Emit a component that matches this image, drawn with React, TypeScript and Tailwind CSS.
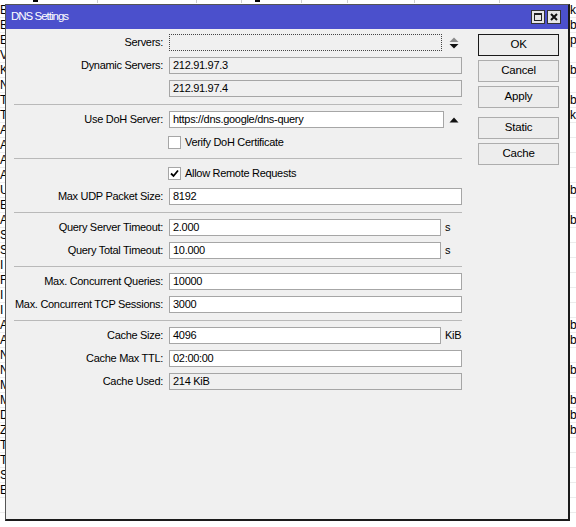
import React from "react";

const FONT = { fontFamily: '"Liberation Sans", Arial, sans-serif' };

const LEFT = ["B", "B", "E", "V", "K", "N", "T", "T", "A", "A", "A", "A", "U", "E", "A", "S", "S", "I", "F", "I", "I", "A", "A", "N", "N", "M", "M", "D", "Z", "T", "T", "S", "E", "", ""];
const RIGHT: Record<number, string> = { 0: "k", 1: "b", 2: "p", 4: "b", 6: "b", 7: "k", 12: "b", 14: "b", 21: "bs", 22: "bs", 24: "b", 26: "bs", 27: "bs", 28: "bp" };
const HEADER = [98, 99, 45, 60, 46, 67, 85];

const Label = ({ text }: { text: string }) => (
  <div className="w-[150px] shrink-0 text-right pr-[1px]">{text}</div>
);

const Input = ({ value = "", w = "w-[293px]", ro = false, dotted = false }: { value?: string; w?: string; ro?: boolean; dotted?: boolean }) => (
  <div
    className={`${w} h-[17px] shrink-0 flex items-center pl-[3px] border ${
      dotted ? "border-dotted border-[#444] bg-[#f0f0f0]" : ro ? "border-[#a6a6a6] bg-[#f0f0f0]" : "border-[#a6a6a6] bg-white"
    }`}
  >
    {value}
  </div>
);

const Row = ({ label = "", children }: { label?: string; children: React.ReactNode }) => (
  <div className="flex items-center h-[17px] gap-[5px]">
    <Label text={label} />
    {children}
  </div>
);

const Sep = () => <div className="h-px bg-[#b9b9b9] mt-[7px] mb-[6px]" />;

const Check = ({ checked, text }: { checked?: boolean; text: string }) => (
  <div className="flex items-center h-[17px]">
    <div className="w-[155px] shrink-0" />
    <div className="w-[13px] h-[13px] border border-[#a6a6a6] bg-white flex items-center justify-center -ml-[1px]">
      {checked && (
        <svg width="9" height="9" viewBox="0 0 9 9">
          <path d="M1 4.5 L3.5 7 L8 1.5" fill="none" stroke="#000" strokeWidth="1.8" />
        </svg>
      )}
    </div>
    <span className="ml-[4px]">{text}</span>
  </div>
);

const Btn = ({ text, primary }: { text: string; primary?: boolean }) => (
  <div
    className={`w-[81px] h-[22px] flex items-center justify-center bg-[#ededed] border ${
      primary ? "border-[#1a1a1a]" : "border-[#adadad]"
    }`}
  >
    {text}
  </div>
);

export default function App() {
  return (
    <div className="relative w-[576px] h-[527px] bg-white overflow-hidden text-black" style={FONT}>
      {/* table behind the dialog */}
      <div className="flex h-[3px]">
        {HEADER.map((w, i) => (
          <div key={i} className="border-r border-[#cfcfcf] h-full shrink-0" style={{ width: w }}>
            {i === 0 && <div className="ml-[33px] w-[5px] h-[2px] bg-black" />}
            {i === 3 && <div className="ml-[13px] w-[5px] h-[2px] bg-black" />}
          </div>
        ))}
      </div>
      {LEFT.map((l, i) => (
        <div key={i} className="flex h-[15px] items-center border-b border-[#ececec] text-[12px] leading-none">
          <div className="w-[570px] shrink-0 overflow-hidden">{l}</div>
          <div>{RIGHT[i] ?? ""}</div>
        </div>
      ))}

      {/* DNS Settings window */}
      <div className="absolute left-[5px] top-[4px] w-[565px] h-[517px] bg-[#f0f0f0] border-l border-t border-[#555] border-r-2 border-b-2 border-r-[#1a1a1a] border-b-[#1a1a1a] text-[11px] tracking-[-0.3px] leading-none">
        <div className="h-[24px] bg-[#4b50cc] flex items-center justify-between pl-[5px] pr-[7px]">
          <span className="text-white text-[11.5px] tracking-[-1px]">DNS Settings</span>
          <div className="flex gap-[2px]">
            <div className="w-[14px] h-[14px] bg-[#e6e6e6] border border-[#333] flex items-center justify-center">
              <div className="w-[8px] h-[8px] border border-[#222] border-t-2" />
            </div>
            <div className="w-[14px] h-[14px] bg-[#e6e6e6] border border-[#333] flex items-center justify-center">
              <svg width="8" height="8" viewBox="0 0 8 8">
                <path d="M1 1 L7 7 M7 1 L1 7" stroke="#111" strokeWidth="2" />
              </svg>
            </div>
          </div>
        </div>

        <div className="flex pt-[5px] pl-[8px]">
          <div className="w-[448px] flex flex-col">
            <div className="flex flex-col gap-[6px]">
              <Row label="Servers:">
                <Input w="w-[273px]" dotted />
                <svg width="10" height="12" viewBox="0 0 10 12" className="ml-[2px]">
                  <path d="M0.5 5 L5 0.5 L9.5 5 Z" fill="#8a8a8a" />
                  <path d="M0.5 7 L5 11.5 L9.5 7 Z" fill="#111" />
                </svg>
              </Row>
              <Row label="Dynamic Servers:">
                <Input value="212.91.97.3" ro />
              </Row>
              <Row>
                <Input value="212.91.97.4" ro />
              </Row>
            </div>
            <Sep />
            <div className="flex flex-col gap-[6px]">
              <Row label="Use DoH Server:">
                <Input value="https://dns.google/dns-query" w="w-[275px]" />
                <svg width="10" height="6" viewBox="0 0 10 6">
                  <path d="M0.5 5.5 L5 0.5 L9.5 5.5 Z" fill="#111" />
                </svg>
              </Row>
              <Check text="Verify DoH Certificate" />
            </div>
            <Sep />
            <div className="flex flex-col gap-[6px]">
              <Check checked text="Allow Remote Requests" />
              <Row label="Max UDP Packet Size:">
                <Input value="8192" />
              </Row>
            </div>
            <Sep />
            <div className="flex flex-col gap-[6px]">
              <Row label="Query Server Timeout:">
                <Input value="2.000" w="w-[272px]" />
                <span className="-ml-[1px]">s</span>
              </Row>
              <Row label="Query Total Timeout:">
                <Input value="10.000" w="w-[272px]" />
                <span className="-ml-[1px]">s</span>
              </Row>
            </div>
            <Sep />
            <div className="flex flex-col gap-[6px]">
              <Row label="Max. Concurrent Queries:">
                <Input value="10000" />
              </Row>
              <Row label="Max. Concurrent TCP Sessions:">
                <Input value="3000" />
              </Row>
            </div>
            <Sep />
            <div className="flex flex-col gap-[6px]">
              <Row label="Cache Size:">
                <Input value="4096" w="w-[272px]" />
                <span className="-ml-[1px]">KiB</span>
              </Row>
              <Row label="Cache Max TTL:">
                <Input value="02:00:00" />
              </Row>
              <Row label="Cache Used:">
                <Input value="214 KiB" ro />
              </Row>
            </div>
          </div>

          <div className="ml-[16px] flex flex-col gap-[4px] tracking-[-0.2px] text-[11.5px]">
            <Btn text="OK" primary />
            <Btn text="Cancel" />
            <Btn text="Apply" />
            <div className="mt-[5px] flex flex-col gap-[4px]">
              <Btn text="Static" />
              <Btn text="Cache" />
            </div>
          </div>
        </div>
      </div>
    </div>
  );
}
